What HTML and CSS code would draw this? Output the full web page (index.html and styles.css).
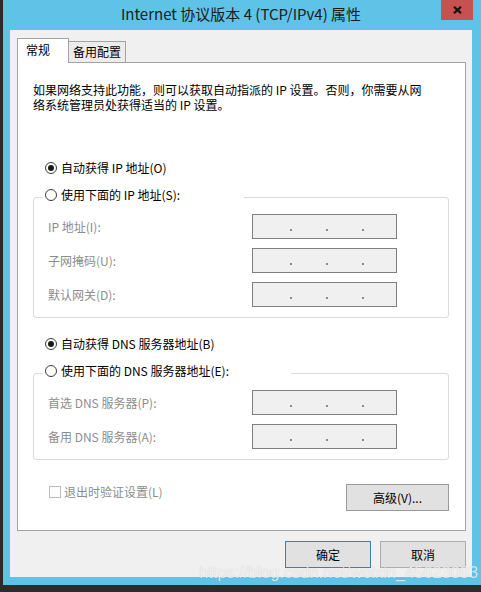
FILE: index.html
```html
<!DOCTYPE html>
<html lang="zh-CN">
<head>
<meta charset="utf-8">
<title>Internet 协议版本 4 (TCP/IPv4) 属性</title>
<link rel="stylesheet" href="styles.css">
</head>
<body>
<div class="window">
  <div class="titlebar">
    <span class="title">Internet 协议版本 4 (TCP/IPv4) 属性</span>
    <div class="close"><svg width="9" height="8" viewBox="0 0 9 8"><path d="M1 0.8 L8 7.2 M8 0.8 L1 7.2" stroke="#111" stroke-width="2.2"/></svg></div>
  </div>
  <div class="client">
    <div class="tabs">
      <div class="tab active">常规</div>
      <div class="tab">备用配置</div>
    </div>
    <div class="panel">
      <p class="desc"><span class="line">如果网络支持此功能，则可以获取自动指派的 IP 设置。否则，你需要从网</span><span class="line">络系统管理员处获得适当的 IP 设置。</span></p>

      <div class="option top-option"><span class="radio checked"></span>自动获得 IP 地址(O)</div>
      <fieldset class="group">
        <legend class="legend legend-ip"><span class="option"><span class="radio"></span>使用下面的 IP 地址(S):</span></legend>
        <div class="field"><span class="label">IP 地址(I):</span><div class="ipbox"><i></i><i></i><i></i></div></div>
        <div class="field"><span class="label">子网掩码(U):</span><div class="ipbox"><i></i><i></i><i></i></div></div>
        <div class="field"><span class="label">默认网关(D):</span><div class="ipbox"><i></i><i></i><i></i></div></div>
      </fieldset>

      <div class="option top-option dns-option"><span class="radio checked"></span>自动获得 DNS 服务器地址(B)</div>
      <fieldset class="group">
        <legend class="legend legend-dns"><span class="option"><span class="radio"></span>使用下面的 DNS 服务器地址(E):</span></legend>
        <div class="field"><span class="label">首选 DNS 服务器(P):</span><div class="ipbox"><i></i><i></i><i></i></div></div>
        <div class="field"><span class="label">备用 DNS 服务器(A):</span><div class="ipbox"><i></i><i></i><i></i></div></div>
      </fieldset>

      <div class="extra">
        <span class="check"><span class="box"></span>退出时验证设置(L)</span>
        <button class="btn advanced">高级(V)...</button>
      </div>
    </div>
    <div class="footer">
      <button class="btn default">确定</button>
      <button class="btn">取消</button>
    </div>
  </div>
  <div class="watermark">https://blog.csdn.net/weixin_45623093</div>
</div>
</body>
</html>
```
FILE: styles.css
```css
* { box-sizing: border-box; }
html, body { margin: 0; padding: 0; }
body {
  width: 481px;
  height: 592px;
  overflow: hidden;
  background: #2c2c2c;
  font-family: "Noto Sans CJK SC", "Noto Sans", sans-serif;
  font-size: 12px;
  color: #000;
}
.window {
  position: relative;
  margin-left: 3px;
  width: 478px;
  height: 585px;
  background: #5ec3e7;
  padding: 0 9px 8px 7px;
  display: flex;
  flex-direction: column;
}
.titlebar {
  position: relative;
  height: 30px;
  display: flex;
  align-items: center;
  justify-content: center;
  flex: none;
}
.title {
  font-size: 15px;
  line-height: 20px;
  color: #1b1b1b;
  margin-top: -2px;
}
.close {
  position: absolute;
  top: 0;
  right: -1px;
  width: 32px;
  height: 20px;
  background: #c75050;
  display: flex;
  align-items: center;
  justify-content: center;
}
.client {
  flex: 1;
  background: #f0f0f0;
  padding: 8px 6px 0 7px;
}
.tabs {
  position: relative;
  z-index: 1;
  display: flex;
  align-items: flex-end;
  height: 25px;
  margin-bottom: -1px;
}
.tab {
  height: 21px;
  margin-bottom: 1px;
  width: 57px;
  border: 1px solid #a3a3a3;
  border-left: none;
  border-bottom: none;
  background: #ececec;
  padding: 2px 0 0 4px;
  line-height: 16px;
}
.tab.active {
  width: 52px;
  height: 25px;
  margin-bottom: 0;
  border-left: 1px solid #a3a3a3;
  background: #fff;
  padding: 3px 0 0 8px;
}
.panel {
  width: 449px;
  height: 469px;
  border: 1px solid #a3a3a3;
  background: #fff;
  padding: 0 16px 0 15px;
}
.desc {
  margin: 0;
  padding-top: 19px;
  line-height: 15px;
}
.desc .line {
  display: block;
  height: 15px;
}
.option {
  display: flex;
  align-items: center;
  height: 16px;
  line-height: 16px;
  white-space: nowrap;
}
.top-option {
  margin-top: 48px;
  padding-left: 12px;
}
.dns-option {
  margin-top: 18px;
}
.radio {
  width: 12px;
  height: 12px;
  border: 1px solid #3c3c3c;
  border-radius: 50%;
  margin-right: 4px;
  display: flex;
  align-items: center;
  justify-content: center;
  background: #fff;
  flex: none;
}
.radio.checked::after {
  content: "";
  width: 6px;
  height: 6px;
  border-radius: 50%;
  background: #1a1a1a;
}
.group {
  margin: 11px 0 0;
  padding: 7px 0 10px;
  width: 416px;
  min-width: 0;
  border: 1px solid #dadada;
  border-radius: 3px;
}
.legend {
  margin-left: 9px;
  padding: 0 0 4px 2px;
  height: 20px;
}
.legend-ip { width: 201px; }
.legend-dns { width: 248px; }
.field {
  display: flex;
  align-items: center;
  height: 25px;
  padding-left: 14px;
}
.field + .field { margin-top: 9px; }
.label {
  width: 204px;
  color: #8d8d8d;
  line-height: 16px;
}
.ipbox {
  width: 145px;
  height: 25px;
  border: 1px solid #7f7f7f;
  background: #f0f0f0;
  display: flex;
  align-items: flex-start;
  gap: 34px;
  padding: 14px 0 0 37px;
}
.ipbox i {
  display: block;
  width: 2px;
  height: 2px;
  background: #8a8a8a;
}
.extra {
  margin-top: 24px;
  display: flex;
  justify-content: space-between;
  align-items: flex-start;
  padding-left: 16px;
  width: 416px;
}
.check {
  display: flex;
  align-items: center;
  height: 16px;
  line-height: 16px;
  color: #8d8d8d;
}
.box {
  width: 12px;
  height: 12px;
  border: 1px solid #bdbdbd;
  background: #fdfdfd;
  margin-right: 3px;
}
.btn {
  width: 86px;
  height: 27px;
  border: 1px solid #adadad;
  background: #e1e1e1;
  font-family: inherit;
  font-size: 12px;
  color: #000;
  padding: 0;
  line-height: 16px;
}
.btn.advanced {
  width: 103px;
  border-color: #9a9a9a;
}
.btn.default {
  border-color: #3c7fb1;
}
.footer {
  margin-top: 10px;
  display: flex;
  justify-content: flex-end;
  gap: 9px;
}
.watermark {
  position: absolute;
  right: 3px;
  bottom: 4px;
  font-family: "Liberation Sans", Arial, sans-serif;
  font-size: 16.4px;
  line-height: 18px;
  color: rgba(255, 255, 255, 0.72);
  text-shadow: 0 0 1px rgba(110, 110, 110, 0.35);
  white-space: nowrap;
}
```
